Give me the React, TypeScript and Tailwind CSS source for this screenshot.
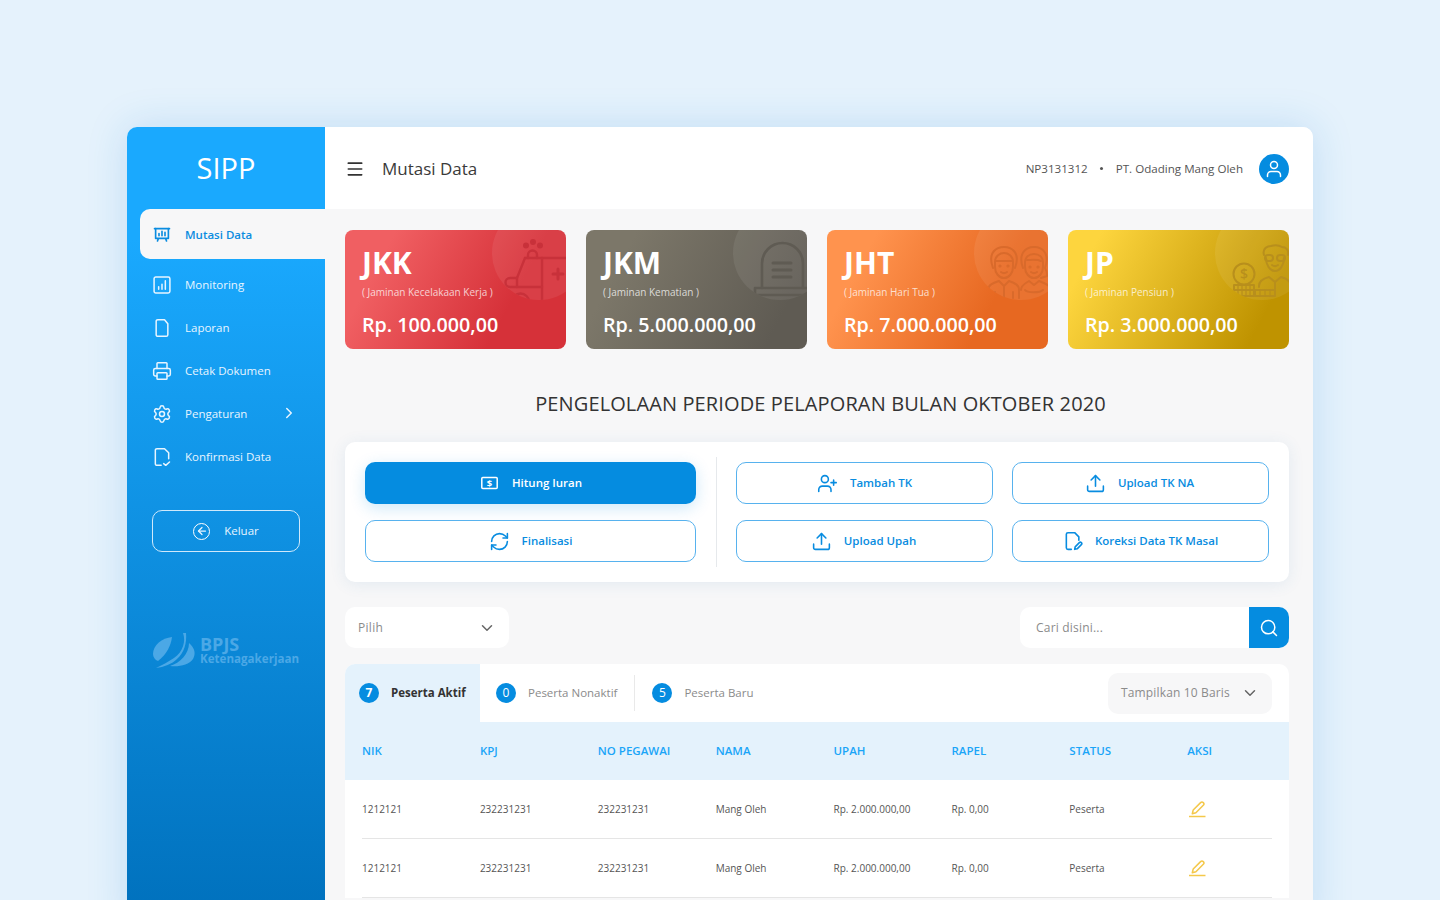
import React from 'react';
import { Menu, Printer, Settings, ChevronRight, ChevronDown, Search, UserPlus, Upload, RefreshCw, ArrowLeft } from 'lucide-react';

const Ico = ({ children, className = '', size = 20, sw = 1.8 }: { children: React.ReactNode; className?: string; size?: number; sw?: number }) => (
  <svg width={size} height={size} viewBox="0 0 24 24" fill="none" stroke="currentColor" strokeWidth={sw} strokeLinecap="round" strokeLinejoin="round" className={className}>{children}</svg>
);
const BoardIcon = () => (
  <Ico size={18} sw={2.200}><path d="M2 3.500h20" /><path d="M3.500 3.500v13h17v-13" /><path d="M8 13v-3M12 13V7M16 13v-4.500" /><path d="M7 17l-1 3M17 17l1 3" /></Ico>
);
const ChartIcon = () => (
  <Ico><rect x="2.500" y="2.500" width="19" height="19" rx="2" /><path d="M8 17v-3M12 17v-6M16 17V7" /></Ico>
);
const FileIcon = () => (
  <Ico><path d="M5 4a2 2 0 0 1 2-2h8l4 5v13a2 2 0 0 1-2 2H7a2 2 0 0 1-2-2z" /></Ico>
);
const FileCheck = () => (
  <Ico><path d="M11 22H6a2 2 0 0 1-2-2V4a2 2 0 0 1 2-2h9l5 5v7" /><path d="M14 20l2.500 2 4.500-4" /></Ico>
);
const FileEdit = () => (
  <Ico size={20} sw={1.9}><path d="M10 22H6a2 2 0 0 1-2-2V4a2 2 0 0 1 2-2h8l5 5v4" /><path d="M14 22l.6-3 5-5a1.600 1.600 0 0 1 2.400 2.400l-5 5z" /></Ico>
);
const MoneyIcon = () => (
  <svg width="17" height="14" viewBox="0 0 17 14" fill="none" stroke="currentColor" strokeWidth="1.500"><rect x=".8" y="1.500" width="15.400" height="11" rx="1" /><text x="8.500" y="10.600" textAnchor="middle" fill="currentColor" stroke="none" fontSize="9.500" fontWeight="700" fontFamily="Open Sans">$</text></svg>
);
const EditLine = () => (
  <svg width="17" height="17" viewBox="0 0 17 17" fill="none" stroke="#f4c84a" strokeWidth="1.500" strokeLinejoin="round"><path d="M3.300 12.700l.9-3.700 7.400-7.400a1.700 1.700 0 0 1 2.700 2.700L6.900 11.700z" /><path d="M0 15.500h16.500" /></svg>
);
const UserIcon = () => (
  <svg width="16" height="18" viewBox="0 0 16 18" fill="none" stroke="white" strokeWidth="1.500"><circle cx="8" cy="5" r="3.500" /><path d="M1.500 16.500v-1.500a3.500 3.500 0 0 1 3.500-3.500h6a3.500 3.500 0 0 1 3.500 3.500v1.500" strokeLinecap="round" /></svg>
);

const Ambulance = () => (
  <svg width="94" height="94" viewBox="0 0 94 94" fill="none" stroke="#c8313a" strokeWidth="2.400" strokeLinecap="round" strokeLinejoin="round">
    <circle cx="34" cy="39.500" r="1.800" fill="#c8313a" /><circle cx="41" cy="36" r="1.800" fill="#c8313a" /><circle cx="48" cy="39.500" r="1.800" fill="#c8313a" />
    <path d="M36 52v-3a4.500 4.500 0 0 1 9 0v3" /><path d="M33 52h41" /><path d="M33 52l-8 20v9" /><path d="M50 52v42" /><path d="M25 72h-7a4.500 4.500 0 0 0 0 9h32" />
    <path d="M20 96a8.500 8.500 0 0 1 17 0" /><path d="M61 68h10M66 63v10" strokeWidth="3" />
  </svg>
);
const Grave = () => (
  <svg width="94" height="94" viewBox="0 0 94 94" fill="none" stroke="#5f5b53" strokeWidth="2.600" strokeLinecap="round" strokeLinejoin="round">
    <path d="M29 82V57.500a20.500 20.500 0 0 1 41 0V82" /><path d="M40 57h18M40 64h18M40 71h18" strokeWidth="3" /><rect x="22" y="82" width="60" height="7" />
  </svg>
);
const Elders = () => (
  <svg width="94" height="94" viewBox="0 0 94 94" fill="none" stroke="#d96a2b" strokeWidth="2" strokeLinecap="round" strokeLinejoin="round">
    <g transform="translate(13 40)">
      <path d="M6 22C0 6 10 1 17 1s17 5 11 21" /><path d="M8 16c0-6 5-9 9-9s9 3 9 9v5c0 6-4 11-9 11s-9-5-9-11z" /><path d="M9 15c4 0 12 0 16 0" /><circle cx="13" cy="20" r=".6" /><circle cx="21" cy="20" r=".6" /><path d="M14 26c2 1.500 4 1.500 6 0" />
      <path d="M1 52V44c0-5 5-7 11-9l5 5 5-5c6 2 10 4 10 9v8" /><path d="M17 40v12M8 46v6M26 46v6" />
      <path d="M36 22C31 8 38 1 47 1s16 7 11 21c2 3 2 6 2 8l-6 2" /><path d="M38 17c0-6 4-9 9-9s9 3 9 9v4c0 6-4 11-9 11s-9-5-9-11z" /><path d="M40 14c4 0 10-1 14 1" /><circle cx="43" cy="21" r=".6" /><circle cx="51" cy="21" r=".6" /><path d="M44 26c2 1.500 4 1.500 6 0" />
      <path d="M34 44c0-5 5-7 8-9l5 4 5-4c5 2 12 4 12 9v8" /><path d="M38 44c2 3 15 3 18 0" />
    </g>
  </svg>
);
const Pensioner = () => (
  <svg width="94" height="94" viewBox="0 0 94 94" fill="none" stroke="#b88f1c" strokeWidth="2" strokeLinecap="round" strokeLinejoin="round">
    <g transform="translate(18 39)">
      <circle cx="11" cy="29" r="10.500" /><text x="11" y="34" textAnchor="middle" fill="#b88f1c" stroke="none" fontSize="14" fontWeight="600" fontFamily="Open Sans">$</text>
      <rect x="1" y="40" width="20" height="5" /><rect x="1" y="45" width="20" height="6" /><rect x="22" y="45" width="20" height="6" />
      <path d="M5 40v5M9 40v5M13 40v5M17 40v5M5 45v6M9 45v6M13 45v6M17 45v6M27 45v6M32 45v6M37 45v6" strokeWidth="1.300" />
      <path d="M31 10c-2-7 4-9 7-9 3-1 8-1 11 1 4 0 7 3 6 8" /><path d="M33 13c0 7 4 13 9 13s9-6 9-13" /><rect x="32" y="10" width="8" height="6" rx="3" /><rect x="44" y="10" width="8" height="6" rx="3" /><path d="M39 20c2 1.500 4 1.500 6 0" />
      <path d="M26 42v-1c0-6 6-8 10-9l6 5 6-5c4 1 10 3 10 10" /><path d="M42 37v8" />
    </g>
  </svg>
);

const cards = [
  { t: 'JKK', s: '( Jaminan Kecelakaan Kerja )', a: 'Rp. 100.000,00', bg: 'bg-[linear-gradient(118deg,#f05f62_18%,#d63139_72%)]', icon: <Ambulance /> },
  { t: 'JKM', s: '( Jaminan Kematian )', a: 'Rp. 5.000.000,00', bg: 'bg-[linear-gradient(118deg,#7c7769_18%,#5f5b53_85%)]', icon: <Grave /> },
  { t: 'JHT', s: '( Jaminan Hari Tua )', a: 'Rp. 7.000.000,00', bg: 'bg-[linear-gradient(118deg,#ff934e_18%,#e76821_72%)]', icon: <Elders /> },
  { t: 'JP', s: '( Jaminan Pensiun )', a: 'Rp. 3.000.000,00', bg: 'bg-[linear-gradient(118deg,#fdd53e_12%,#bf9300_85%)]', icon: <Pensioner /> },
];

const nav = [
  { l: 'Monitoring', i: <ChartIcon /> },
  { l: 'Laporan', i: <FileIcon /> },
  { l: 'Cetak Dokumen', i: <Printer size={20} strokeWidth={1.8} /> },
  { l: 'Pengaturan', i: <Settings size={20} strokeWidth={1.8} />, chev: true },
  { l: 'Konfirmasi Data', i: <FileCheck /> },
];

const Btn = ({ icon, label, className = '' }: { icon: React.ReactNode; label: string; className?: string }) => (
  <button className={`h-[42px] flex items-center justify-center gap-[12px] rounded-[10px] border border-[#57b2ee] bg-white text-[#088ce0] text-[11.500px] font-semibold ${className}`}>
    {icon}<span>{label}</span>
  </button>
);

const heads = ['NIK', 'KPJ', 'NO PEGAWAI', 'NAMA', 'UPAH', 'RAPEL', 'STATUS', 'AKSI'];
const row = ['1212121', '232231231', '232231231', 'Mang Oleh', 'Rp. 2.000.000,00', 'Rp. 0,00', 'Peserta'];

const Badge = ({ n }: { n: number }) => (
  <span className="w-5 h-5 rounded-full bg-[#058ce0] text-white text-[12px] flex items-center justify-center shrink-0">{n}</span>
);

export default function App() {
  return (
    <div className="h-[900px] overflow-hidden bg-[#e5f2fc] pt-[127px] pl-[127px] font-['Open_Sans',sans-serif]">
      <div className="w-[1186px] h-[800px] flex rounded-t-[10px] overflow-hidden bg-[#f7f7f8] shadow-[0_0_40px_rgba(30,130,210,0.18)]">
        <aside className="w-[198px] shrink-0 bg-[linear-gradient(180deg,#1aa9fe_0%,#1aa9fe_14%,#0070bc_100%)] text-white pl-[13px]">
          <div className="h-[82px] flex items-center justify-center pr-[13px] text-[29px] font-medium">SIPP</div>
          <div className="h-[50px] flex items-center gap-[14px] pl-[13px] pt-[1px] bg-[#f7f7f8] rounded-l-[10px] text-[#0a8ce0] text-[11.500px] font-semibold">
            <BoardIcon /><span>Mutasi Data</span>
          </div>
          <nav className="mt-[4px] flex flex-col">
            {nav.map(n => (
              <div key={n.l} className="h-[43px] flex items-center gap-[13px] pl-[12px] text-[11.500px] text-[#e8f5ff]">
                <span className="w-[20px] flex justify-center shrink-0">{n.i}</span>
                <span>{n.l}</span>
                {n.chev && <ChevronRight size={18} className="ml-[20px] -mt-[1px]" strokeWidth={2} />}
              </div>
            ))}
          </nav>
          <button className="mt-[32px] ml-[12px] w-[148px] h-[42px] rounded-[10px] border border-[#cfe9fb] flex items-center justify-center gap-[14px] text-[11.500px] text-[#e8f5ff]">
            <span className="w-[17px] h-[17px] rounded-full border-[1.500px] border-white flex items-center justify-center"><ArrowLeft size={12} strokeWidth={2.500} /></span>
            Keluar
          </button>
          <div className="mt-[81px] ml-[12px] flex items-center gap-[4px] text-[#4ba8e6]">
            <svg width="44" height="36" viewBox="0 0 44 36" fill="#4ba8e6">
              <path d="M1 21C1 12 10 5 20 4c-1 8-5 17-14 24-3-1-5-4-5-7z" />
              <path d="M31 0c3 8 0 19-9 25-6 4-12 7-18 10 8-1 16-4 21-9 7-6 10-16 9-26z" />
              <path d="M37 10c6 5 7 11 4 16-4 6-14 8-23 7 10-3 19-12 19-23z" />
            </svg>
            <div className="font-bold">
              <div className="text-[18px] leading-[15px]">BPJS</div>
              <div className="text-[11.600px] leading-[13px]">Ketenagakerjaan</div>
            </div>
          </div>
        </aside>

        <main className="flex-1 min-w-0">
          <header className="h-[82px] bg-white flex items-center pl-[20px] pr-[24px] pt-[1px]">
            <Menu size={20} strokeWidth={2} className="text-[#333]" />
            <h1 className="ml-[17px] text-[17px] font-medium text-[#3a3a3a]">Mutasi Data</h1>
            <div className="ml-auto flex items-center text-[11.600px] text-[#555]">
              <span>NP3131312</span>
              <span className="w-[3px] h-[3px] rounded-full bg-[#555] mx-[12.500px]" />
              <span>PT. Odading Mang Oleh</span>
              <span className="ml-[16px] w-[30px] h-[30px] rounded-full bg-[#058ce0] flex items-center justify-center"><UserIcon /></span>
            </div>
          </header>

          <div className="pl-[20px] pr-[24px] pt-[21px]">
            <div className="grid grid-cols-4 gap-[20px]">
              {cards.map(c => (
                <div key={c.t} className={`relative h-[119px] rounded-[8px] overflow-hidden text-white pl-[17px] ${c.bg}`}>
                  <div className="absolute left-[147px] top-[-24px] w-[94px] h-[94px] rounded-full bg-white/[0.07] overflow-hidden">{c.icon}</div>
                  <div className="relative pt-[13px] text-[30px] leading-[40px] font-bold">{c.t}</div>
                  <div className="relative mt-[3px] text-[10px] leading-[13px] text-white/75">{c.s}</div>
                  <div className="relative mt-[12px] text-[19.700px] leading-[28px] font-semibold">{c.a}</div>
                </div>
              ))}
            </div>

            <h2 className="mt-[41px] pl-[7px] text-center text-[20px] leading-[28px] font-medium tracking-[0.12px] text-[#333]">PENGELOLAAN PERIODE PELAPORAN BULAN OKTOBER 2020</h2>

            <section className="mt-[24px] h-[140px] bg-white rounded-[10px] shadow-[0_2px_16px_rgba(50,120,180,0.1)] p-[20px] flex">
              <div className="w-[331px] flex flex-col gap-[16px]">
                <button className="h-[42px] flex items-center justify-center gap-[14px] pl-[2px] rounded-[10px] bg-[#058ce0] text-white text-[11.500px] font-semibold shadow-[0_4px_16px_rgba(5,140,224,0.2)]">
                  <MoneyIcon /><span>Hitung Iuran</span>
                </button>
                <Btn icon={<RefreshCw size={21} strokeWidth={1.800} />} label="Finalisasi" />
              </div>
              <div className="ml-[20px] mr-[19px] -my-[5px] w-px bg-[#e6e9ec]" />
              <div className="flex-1 grid grid-cols-2 gap-x-[19px] gap-y-[16px]">
                <Btn icon={<UserPlus size={21} strokeWidth={1.800} />} label="Tambah TK" />
                <Btn icon={<Upload size={21} strokeWidth={1.800} />} label="Upload TK NA" className="pr-[2px]" />
                <Btn icon={<Upload size={21} strokeWidth={1.800} />} label="Upload Upah" className="pr-[2px]" />
                <Btn icon={<FileEdit />} label="Koreksi Data TK Masal" />
              </div>
            </section>

            <div className="mt-[25px] h-[41px] flex justify-between">
              <div className="w-[164px] bg-white rounded-[10px] flex items-center justify-between px-[13px] text-[12px] tracking-[0.3px] text-[#8b8b8b]">
                Pilih <ChevronDown size={18} className="text-[#666]" />
              </div>
              <div className="w-[269px] bg-white rounded-[10px] flex overflow-hidden">
                <div className="flex-1 flex items-center pl-[16px] text-[12px] tracking-[0.2px] text-[#8b8b8b]">Cari disini...</div>
                <div className="w-[40px] bg-[#058ce0] flex items-center justify-center text-white"><Search size={20} strokeWidth={1.800} /></div>
              </div>
            </div>

            <section className="mt-[16px] bg-white rounded-t-[10px] overflow-hidden">
              <div className="h-[58px] flex items-center">
                <div className="h-full w-[135px] bg-[#e4f2fc] flex items-center gap-[12px] pl-[14px] text-[11.500px] font-bold text-[#333]">
                  <Badge n={7} /><span>Peserta Aktif</span>
                </div>
                <div className="flex items-center gap-[12px] pl-[16px] pr-[17px] h-[36px] border-r border-[#e9e9e9] text-[11.500px] text-[#8b8b8b]">
                  <Badge n={0} /><span>Peserta Nonaktif</span>
                </div>
                <div className="flex items-center gap-[12px] pl-[17px] text-[11.500px] text-[#8b8b8b]">
                  <Badge n={5} /><span>Peserta Baru</span>
                </div>
                <div className="ml-auto mr-[17px] w-[164px] h-[41px] bg-[#f7f7f8] rounded-[10px] flex items-center justify-between px-[13px] text-[12px] tracking-[0.15px] text-[#8b8b8b]">
                  Tampilkan 10 Baris <ChevronDown size={18} className="text-[#666]" />
                </div>
              </div>
              <div className="h-[58px] bg-[#e4f2fc] grid grid-cols-[repeat(8,117.900px)] items-center pl-[17px] text-[11.500px] font-semibold text-[#1aa5f8]">
                {heads.map(h => <div key={h}>{h}</div>)}
              </div>
              {[0, 1].map(i => (
                <div key={i} className="mx-[17px] h-[59px] grid grid-cols-[repeat(8,117.900px)] items-center border-b border-[#e5e5e5] text-[10px] text-[#555]">
                  {row.map((v, k) => <div key={k}>{v}</div>)}
                  <div className="pl-[2px]"><EditLine /></div>
                </div>
              ))}
            </section>
          </div>
        </main>
      </div>
    </div>
  );
}
